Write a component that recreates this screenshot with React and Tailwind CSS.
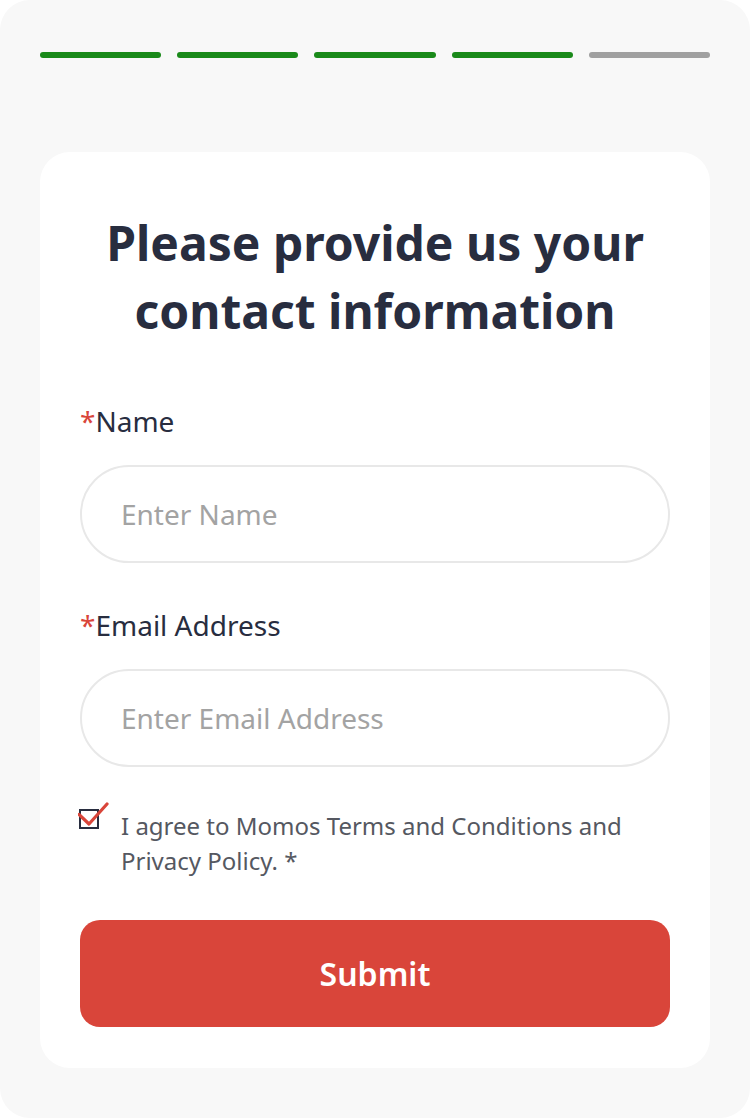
import React from "react";

export default function App() {
  const font = { fontFamily: '"Noto Sans", "Open Sans", sans-serif' };
  return (
    <div className="w-[750px] h-[1118px] bg-white" style={font}>
      <div className="w-full h-full bg-[#f8f8f8] rounded-[30px] flex flex-col px-[40px] pt-[52px] pb-[50px]">
        <div className="flex gap-[16px]">
          <div className="flex-1 h-[6px] rounded-full bg-[#1a8a1a]" />
          <div className="flex-1 h-[6px] rounded-full bg-[#1a8a1a]" />
          <div className="flex-1 h-[6px] rounded-full bg-[#1a8a1a]" />
          <div className="flex-1 h-[6px] rounded-full bg-[#1a8a1a]" />
          <div className="flex-1 h-[6px] rounded-full bg-[#a0a0a0]" />
        </div>
        <div className="mt-[94px] flex-1 bg-white rounded-[30px] px-[40px] pt-[57px] pb-[41px] flex flex-col">
          <h1 className="text-center font-bold text-[48px] leading-[68px] text-[#282d3f]">
            Please provide us your contact information
          </h1>
          <label className="mt-[58px] text-[28px] leading-[36px] text-[#282d3f]">
            <span className="text-[#d9453a]">*</span>Name
          </label>
          <input
            placeholder="Enter Name"
            className="mt-[26px] h-[98px] rounded-full border-2 border-[#e8e8e8] px-[39px] text-[28px] text-[#282d3f] placeholder:text-[#a3a3a3] outline-none"
            style={font}
          />
          <label className="mt-[44px] text-[28px] leading-[36px] text-[#282d3f]">
            <span className="text-[#d9453a]">*</span>Email Address
          </label>
          <input
            placeholder="Enter Email Address"
            className="mt-[26px] h-[98px] rounded-full border-2 border-[#e8e8e8] px-[39px] text-[28px] text-[#282d3f] placeholder:text-[#a3a3a3] outline-none"
            style={font}
          />
          <div className="mt-[41px] flex">
            <div className="w-[41px] shrink-0 relative">
              <svg width="34" height="30" viewBox="0 0 34 30" className="absolute left-[-2px] top-[-6px]">
                <rect x="2" y="8" width="18" height="18" fill="none" stroke="#282d3f" strokeWidth="2" />
                <path d="M1 12.5 L11 22 L29 2" fill="none" stroke="#d9453a" strokeWidth="3.2" strokeLinecap="round" strokeLinejoin="round" />
              </svg>
            </div>
            <p className="text-[24px] leading-[35px] text-[#555861]">
              I agree to Momos Terms and Conditions and Privacy Policy. *
            </p>
          </div>
          <button className="mt-[42px] h-[107px] rounded-[20px] bg-[#d9453a] text-white text-[32px] font-semibold">
            Submit
          </button>
        </div>
      </div>
    </div>
  );
}
